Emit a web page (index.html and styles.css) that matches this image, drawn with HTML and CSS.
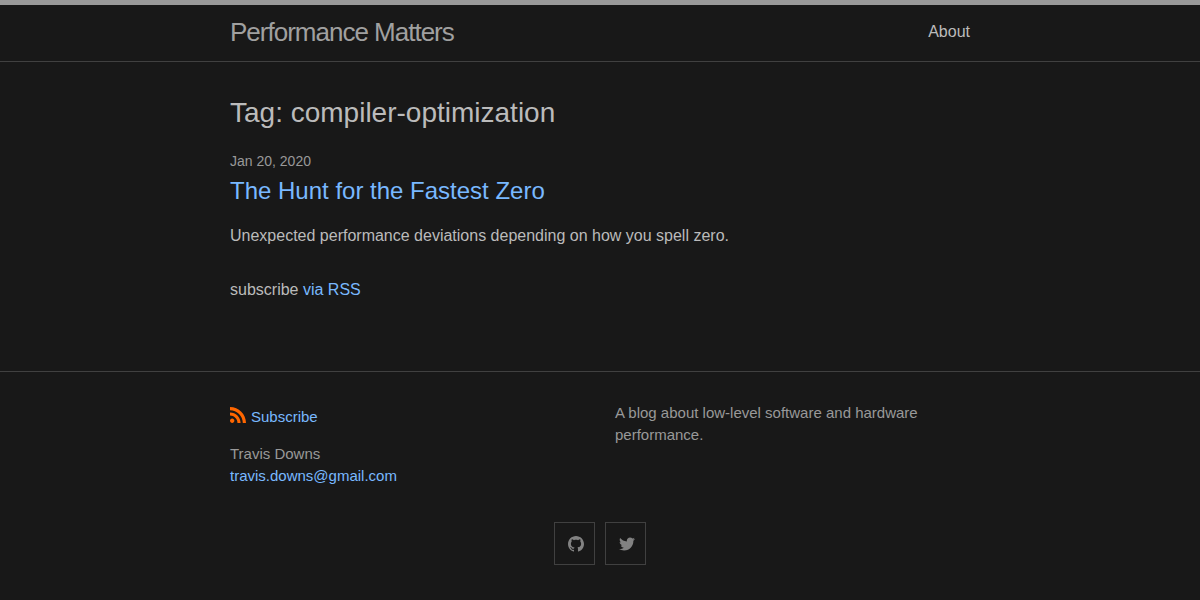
FILE: index.html
```html
<!DOCTYPE html>
<html lang="en">
<head>
<meta charset="utf-8">
<title>Performance Matters</title>
<link rel="stylesheet" href="styles.css">
</head>
<body>
<header class="site-header">
  <div class="wrapper header-row">
    <a class="site-title" href="#">Performance Matters</a>
    <nav class="site-nav"><a href="#">About</a></nav>
  </div>
</header>
<main class="page-content">
  <div class="wrapper">
    <h1 class="tag-title">Tag: compiler-optimization</h1>
    <span class="post-meta">Jan 20, 2020</span>
    <h3 class="post-heading"><a href="#">The Hunt for the Fastest Zero</a></h3>
    <p class="excerpt">Unexpected performance deviations depending on how you spell zero.</p>
    <p class="rss">subscribe <a href="#">via RSS</a></p>
  </div>
</main>
<footer class="site-footer">
  <div class="wrapper">
    <div class="footer-columns">
      <div class="footer-column">
        <p class="feed"><a href="#"><svg class="feed-icon" viewBox="0 0 24 24"><path d="M19.199 24C19.199 13.467 10.533 4.800 0 4.800V0c13.165 0 24 10.835 24 24h-4.801zM3.291 17.415c1.814 0 3.293 1.479 3.293 3.295 0 1.813-1.485 3.290-3.301 3.290C1.470 24 0 22.526 0 20.710s1.475-3.294 3.291-3.295zM15.909 24h-4.665c0-6.169-5.075-11.245-11.244-11.245V8.090c8.727 0 15.909 7.184 15.909 15.910z"/></svg><span>Subscribe</span></a></p>
        <ul class="contact"><li>Travis Downs</li><li><a href="#">travis.downs@gmail.com</a></li></ul>
      </div>
      <div class="footer-column"><p class="description">A blog about low-level software and hardware performance.</p></div>
    </div>
    <div class="social">
      <a href="#" aria-label="GitHub"><svg viewBox="0 0 16 16"><path d="M8 0C3.58 0 0 3.582 0 8c0 3.535 2.292 6.533 5.470 7.590.4.075.547-.172.547-.385 0-.19-.007-.693-.010-1.360-2.226.483-2.695-1.073-2.695-1.073-.364-.924-.889-1.170-.889-1.170-.726-.496.055-.486.055-.486.803.056 1.226.824 1.226.824.714 1.223 1.873.870 2.329.665.072-.517.279-.870.508-1.070-1.777-.202-3.645-.888-3.645-3.954 0-.873.312-1.587.823-2.147-.082-.202-.357-1.016.078-2.117 0 0 .672-.215 2.200.820.638-.177 1.323-.266 2.003-.269.680.003 1.365.092 2.004.269 1.527-1.035 2.198-.820 2.198-.820.437 1.101.162 1.915.080 2.117.513.560.823 1.274.823 2.147 0 3.073-1.871 3.749-3.653 3.947.287.247.543.735.543 1.481 0 1.070-.010 1.932-.010 2.195 0 .215.144.463.550.385C13.710 14.530 16 11.532 16 8c0-4.418-3.582-8-8-8"/></svg></a>
      <a href="#" aria-label="Twitter"><svg viewBox="0 0 16 16"><path d="M15.969 3.058c-.586.260-1.217.436-1.878.515.675-.405 1.194-1.045 1.438-1.809-.632.375-1.332.647-2.076.793-.596-.636-1.446-1.033-2.387-1.033-1.806 0-3.270 1.464-3.270 3.270 0 .256.029.506.085.745C5.163 5.404 2.753 4.102 1.140 2.124c-.281.482-.442 1.044-.442 1.644 0 1.134.577 2.135 1.455 2.722-.536-.017-1.040-.164-1.481-.410v.041c0 1.585 1.127 2.907 2.623 3.206-.274.074-.563.115-.861.115-.211 0-.416-.021-.616-.060.416 1.299 1.624 2.245 3.055 2.271-1.119.877-2.529 1.400-4.061 1.400-.264 0-.524-.015-.780-.046 1.447.928 3.166 1.469 5.013 1.469 6.015 0 9.304-4.983 9.304-9.304 0-.142-.003-.283-.009-.423.639-.461 1.193-1.037 1.632-1.693z"/></svg></a>
    </div>
  </div>
</footer>
</body>
</html>
```
FILE: styles.css
```css
* { box-sizing: border-box; margin: 0; padding: 0; }
body {
  background: #181818;
  color: #bbb;
  font: 400 16px/24px "Liberation Sans", Arial, sans-serif;
  height: 600px;
  overflow: hidden;
}
a { color: #79b8ff; text-decoration: none; }
.wrapper { width: 740px; margin: 0 auto; }
.site-header { height: 62px; border-top: 5px solid #999; border-bottom: 1px solid #404040; }
.header-row { display: flex; justify-content: space-between; line-height: 54px; }
.site-title { font-size: 26px; font-weight: 300; letter-spacing: -1px; color: #a0a0a0; }
.site-nav a { color: #bbb; }
.page-content { height: 309px; padding-top: 30px; }
.tag-title { font-size: 28px; line-height: 42px; font-weight: 400; margin-bottom: 15px; }
.post-meta { display: block; font-size: 14px; color: #999; }
.post-heading { font-size: 24px; line-height: 36px; font-weight: 400; margin-bottom: 15px; }
.excerpt { margin-bottom: 30px; }
.site-footer { border-top: 1px solid #404040; padding-top: 30px; font-size: 15px; line-height: 22px; color: #999; }
.footer-columns { display: flex; gap: 30px; height: 120px; }
.footer-column { width: 355px; }
.feed { padding-top: 4px; margin-bottom: 15px; }
.feed a { display: flex; gap: 5px; }
.feed-icon { width: 16px; height: 16px; margin-top: 1px; fill: #f60; }
.contact { list-style: none; }
.social { display: flex; justify-content: center; gap: 10px; }
.social a { width: 41px; height: 43px; border: 1px solid #404040; padding: 13px 0 0 13px; }
.social svg { display: block; width: 16px; height: 16px; fill: #828282; }
```
